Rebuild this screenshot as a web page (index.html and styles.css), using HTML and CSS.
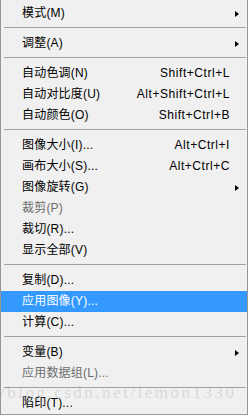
FILE: index.html
```html
<!DOCTYPE html>
<html lang="zh-CN">
<head>
  <meta charset="UTF-8" />
  <meta name="viewport" content="width=device-width, initial-scale=1.0" />
  <title>图像菜单</title>
  <link rel="stylesheet" href="styles.css">
</head>
<body>
  <div class="menu">
    <div class="item"><span class="label">模式(M)</span><span class="key"></span><span class="sub"><i class="arrow"></i></span></div>
    <div class="sep"></div>
    <div class="item"><span class="label">调整(A)</span><span class="key"></span><span class="sub"><i class="arrow"></i></span></div>
    <div class="sep"></div>
    <div class="item"><span class="label">自动色调(N)</span><span class="key">Shift+Ctrl+L</span><span class="sub"></span></div>
    <div class="item"><span class="label">自动对比度(U)</span><span class="key">Alt+Shift+Ctrl+L</span><span class="sub"></span></div>
    <div class="item"><span class="label">自动颜色(O)</span><span class="key">Shift+Ctrl+B</span><span class="sub"></span></div>
    <div class="sep"></div>
    <div class="item"><span class="label">图像大小(I)...</span><span class="key">Alt+Ctrl+I</span><span class="sub"></span></div>
    <div class="item"><span class="label">画布大小(S)...</span><span class="key">Alt+Ctrl+C</span><span class="sub"></span></div>
    <div class="item"><span class="label">图像旋转(G)</span><span class="key"></span><span class="sub"><i class="arrow"></i></span></div>
    <div class="item disabled"><span class="label">裁剪(P)</span><span class="key"></span><span class="sub"></span></div>
    <div class="item"><span class="label">裁切(R)...</span><span class="key"></span><span class="sub"></span></div>
    <div class="item"><span class="label">显示全部(V)</span><span class="key"></span><span class="sub"></span></div>
    <div class="sep"></div>
    <div class="item"><span class="label">复制(D)...</span><span class="key"></span><span class="sub"></span></div>
    <div class="item selected"><span class="label">应用图像(Y)...</span><span class="key"></span><span class="sub"></span></div>
    <div class="item"><span class="label">计算(C)...</span><span class="key"></span><span class="sub"></span></div>
    <div class="sep"></div>
    <div class="item"><span class="label">变量(B)</span><span class="key"></span><span class="sub"><i class="arrow"></i></span></div>
    <div class="item disabled"><span class="label">应用数据组(L)...</span><span class="key"></span><span class="sub"></span></div>
    <div class="sep"></div>
    <div class="item"><span class="label">陷印(T)...</span><span class="key"></span><span class="sub"></span></div>
    <div class="watermark">/blog.csdn.net/lemon1330</div>
  </div>
</body>
</html>
```

FILE: styles.css
```css
body {
  margin: 0;
  background: #fff;
  font-family: "Liberation Sans", "Noto Sans CJK SC", sans-serif;
  font-size: 12px;
  color: #000;
}
.menu {
  position: relative;
  width: 246px;
  height: 411px;
  padding-top: 3px;
  background: #f0f0f0;
  border-left: 1px solid #979797;
  border-right: 1px solid #979797;
  border-bottom: 1px solid #979797;
  overflow: hidden;
}
.item {
  display: grid;
  grid-template-columns: 1fr auto 17px;
  height: 21px;
  line-height: 21px;
  padding-left: 21px;
  white-space: nowrap;
}
.label {
  letter-spacing: 0.2px;
}
.key {
  text-align: right;
  letter-spacing: 0.55px;
}
.sub {
  display: flex;
  align-items: center;
  padding-left: 5px;
}
.arrow {
  width: 0;
  height: 0;
  border-left: 4px solid #000;
  border-top: 3.5px solid transparent;
  border-bottom: 3.5px solid transparent;
}
.disabled {
  color: #6d6d6d;
}
.selected {
  background: #3399ff;
  color: #fff;
}
.sep {
  height: 1px;
  margin: 3px 1px 5px 3px;
  background: #a0a0a0;
}
.watermark {
  position: absolute;
  left: -1px;
  top: 383px;
  font-family: "Liberation Serif", serif;
  font-size: 17px;
  letter-spacing: 2.5px;
  color: rgba(150, 150, 150, 0.28);
  pointer-events: none;
}
```
